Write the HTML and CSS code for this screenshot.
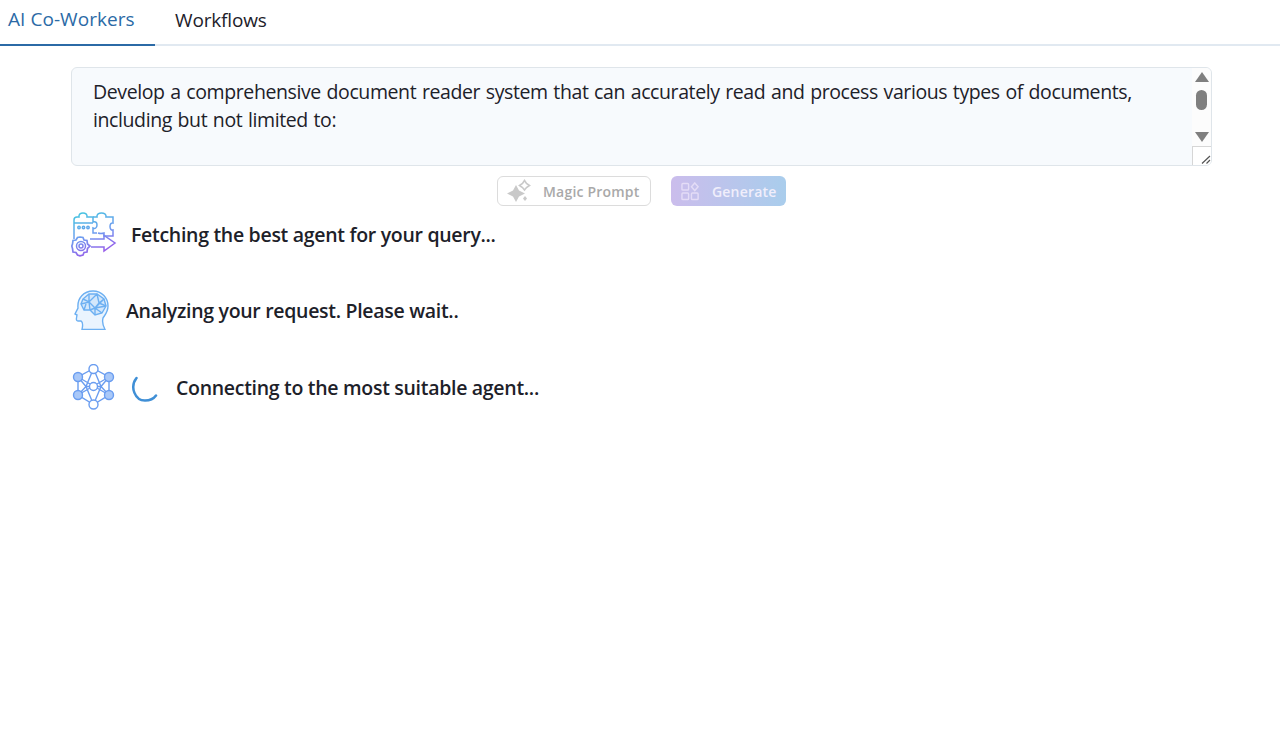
FILE: index.html
```html
<!DOCTYPE html>
<html lang="en">
<head>
<meta charset="utf-8">
<title>AI Co-Workers</title>
<link rel="stylesheet" href="styles.css">
</head>
<body>
<svg class="defs" width="0" height="0" aria-hidden="true">
  <defs>
    <linearGradient id="puzzleGrad" gradientUnits="userSpaceOnUse" x1="14" y1="0" x2="30" y2="46">
      <stop offset="0" stop-color="#45c4e0"/>
      <stop offset="0.5" stop-color="#6f9bf0"/>
      <stop offset="1" stop-color="#a04fe8"/>
    </linearGradient>
  </defs>
</svg>
<nav class="tabs">
  <a class="tab tab-active">AI Co-Workers</a>
  <a class="tab tab-plain">Workflows</a>
</nav>
<main class="content">
  <div class="prompt">
    <p class="prompt-text">Develop a comprehensive document reader system that can accurately read and process various types of documents, including but not limited to:</p>
    <div class="scroll">
      <svg class="arrow" viewBox="0 0 14 10"><path d="M7 0L14 10H0Z"/></svg>
      <div class="thumb"></div>
      <svg class="arrow arrow-down" viewBox="0 0 14 10"><path d="M0 0H14L7 10Z"/></svg>
      <div class="resizer">
        <svg viewBox="0 0 18 18"><path d="M9 16.500L17 9M13.500 16.500L17 13"/></svg>
      </div>
    </div>
  </div>
  <div class="actions">
    <button class="btn btn-magic">
      <svg class="btn-icon" viewBox="0 0 24 24"><path d="M9 6L12 11.500L18 14.500L12 17.500L9 23L6 17.500L0 14.500L6 11.500Z" fill="#c9c9c9"/><path d="M17.500 1.500L19.500 4.500L22.500 6.500L19.500 8.500L17.500 11L15.500 8.500L12.500 6.500L15.500 4.500Z" fill="none" stroke="#c9c9c9" stroke-width="1.6"/><path d="M18 17L20 19.500L18 22L16 19.500Z" fill="#c9c9c9"/></svg>
      <span>Magic Prompt</span>
    </button>
    <button class="btn btn-generate">
      <svg class="btn-icon" viewBox="0 0 20 20" fill="none" stroke="#e4dcf6" stroke-width="1.5"><rect x="1" y="1.500" width="7" height="7" rx="1"/><rect x="1" y="11.500" width="7" height="7" rx="1"/><rect x="11" y="11.500" width="7" height="7" rx="1"/><path d="M14.500 1L18 5L14.500 9L11 5Z"/></svg>
      <span>Generate</span>
    </button>
  </div>
  <div class="status status-one">
    <svg class="icon-puzzle" viewBox="0 0 46 46" fill="none" stroke="url(#puzzleGrad)" stroke-width="1.500">
      <path d="M3 28V9Q3 6 6 6H8C7 0.500 17 0.500 16 6H22V11C25 10 26 12 26 14C26 17 24 18 22 17V22H26"/>
      <path d="M3 12H22"/>
      <path d="M22 6H26C25 0.500 36 0.500 35 6H42V12C38 11 38 20 42 19V25H33V22C30 23 27 22 27 22"/>
      <circle cx="8" cy="16.500" r="1.200"/><circle cx="12.500" cy="16.500" r="1.200"/><circle cx="17" cy="16.500" r="1.200"/>
      <path d="M19 28H33V24.500L44 32L33 40V36H20"/>
      <path d="M9 26L12 26.500L13 29L16 29.500L16.500 33L19 35L16.500 37.500L16 41L13 41.500L12 44L9 44.800L6.500 44L5 41.500L2 41L1.500 37.500L0.800 35L1.500 33L2 29.500L5 29L6.500 26.500Z" stroke-width="1.700"/>
      <circle cx="10" cy="35" r="4.500"/><circle cx="10" cy="35" r="2"/>
    </svg>
    <span class="status-text">Fetching the best agent for your query...</span>
  </div>
  <div class="status status-two">
    <svg class="icon-head" viewBox="0 0 36 40" fill="none" stroke="#6db0f2" stroke-width="1.400">
      <path d="M8 39.500C9 35 9 32 7 31H4Q2 31 2.500 28L3 25L1 24L4 18C3 8 10 1 19 1C28 1 34 8 34 16C34 22 31 25 29 28C28 32 29 36 31 39.500Z" fill="#eaf4fe"/>
      <path d="M9 9L15 4L23 4L30 9L32 16L28 23L21 25L16 20L10 20L7 14Z" fill="#d3e7fb"/>
      <path d="M9 9L15 12L23 4M15 4V12L21 18L30 9M7 14L15 12L16 20M21 18L32 16M21 18L28 23M21 18V25M16 20L21 18M23 4L25 13L30 9M25 13L32 16M25 13L21 18M10 20L12 14"/>
    </svg>
    <span class="status-text">Analyzing your request. Please wait..</span>
  </div>
  <div class="status status-three">
    <svg class="icon-net" viewBox="0 0 44 46" fill="none" stroke="#6a9df0" stroke-width="1.400">
      <path d="M21.500 4.500L6 13L6 31L21.500 40.500L37 31L37 13Z"/>
      <path d="M21.500 4.500L14 22.500L21.500 40.500L29 22.500ZM6 13L37 31M37 13L6 31M6 13L14 22.500L6 31M37 13L29 22.500L37 31M14 22.500H29"/>
      <circle cx="21.500" cy="5" r="4.500" fill="#fff"/>
      <circle cx="21.500" cy="40.500" r="4.500" fill="#fff"/>
      <circle cx="6" cy="13" r="4.500" fill="#a9c8f8"/>
      <circle cx="37" cy="13" r="4.500" fill="#a9c8f8"/>
      <circle cx="6" cy="31" r="4.500" fill="#a9c8f8"/>
      <circle cx="37" cy="31" r="4.500" fill="#a9c8f8"/>
      <circle cx="21.500" cy="22.500" r="4" fill="#fff"/>
    </svg>
    <svg class="spinner" viewBox="0 0 30 30" fill="none"><path d="M6.500 6C-0.500 15 5 28.500 15 28.500C19.500 28.500 23.500 27 26 23.500" stroke="#3f8fd6" stroke-width="2.500" stroke-linecap="round"/></svg>
    <span class="status-text">Connecting to the most suitable agent...</span>
  </div>
</main>
</body>
</html>
```

FILE: styles.css
```css
* { box-sizing: border-box; }
html, body { margin: 0; padding: 0; }
body {
  background: #fff;
  color: #1d2129;
  font-family: "Open Sans", "Noto Sans", "Liberation Sans", sans-serif;
  height: 750px;
  overflow: hidden;
}
.defs { display: block; height: 0; }
.tabs {
  display: flex;
  height: 46px;
  border-bottom: 2px solid #e1e9f1;
}
.tab {
  display: flex;
  align-items: center;
  height: 46px;
  padding: 0 0 6px 8px;
  font-size: 19px;
  letter-spacing: 0.05px;
  color: #1d2129;
}
.tab-plain { margin-left: 12px; letter-spacing: -0.15px; }
.tab-active {
  width: 155px;
  color: #2b6aa6;
  border-bottom: 2px solid #2b6aa6;
}
.content {
  width: 1141px;
  margin: 21px 0 0 71px;
}
.prompt {
  display: flex;
  height: 99px;
  background: #f7fafd;
  border: 1px solid #dfe5ea;
  border-radius: 6px;
  overflow: hidden;
}
.prompt-text {
  flex: 1;
  margin: 0;
  padding: 10px 50px 0 21px;
  font-size: 19.500px;
  line-height: 28px;
  letter-spacing: -0.4px;
  word-spacing: 1px;
}
.scroll {
  position: relative;
  width: 19px;
  background: #fcfcfc;
  display: flex;
  flex-direction: column;
  align-items: center;
  padding: 4px 0 0;
}
.arrow { width: 14px; height: 10px; fill: #7f7f7f; flex: none; }
.arrow-down { margin-top: 22px; }
.thumb { width: 11px; height: 20px; margin-top: 8px; background: #7f7f7f; border-radius: 6px; flex: none; }
.resizer {
  position: absolute;
  right: 0;
  bottom: 0;
  width: 19px;
  height: 19px;
  background: #fff;
  border-left: 1px solid #d6d6d6;
  border-top: 1px solid #d6d6d6;
}
.resizer svg { display: block; width: 18px; height: 18px; fill: none; stroke: #555; stroke-width: 1.200; }
.actions {
  display: flex;
  justify-content: center;
  gap: 20px;
  margin-top: 10px;
}
.btn {
  display: flex;
  align-items: center;
  height: 30px;
  border-radius: 6px;
  font: 600 14px "Open Sans", "Noto Sans", sans-serif;
  letter-spacing: 0.2px;
  padding: 0;
}
.btn-icon { flex: none; }
.btn-magic {
  width: 154px;
  background: #fff;
  border: 1.500px solid #dcdcdc;
  color: #a9a9a9;
  padding-left: 9px;
  gap: 12px;
}
.btn-magic .btn-icon { width: 24px; height: 24px; }
.btn-generate {
  width: 115px;
  border: 0;
  color: #f0eefb;
  background: linear-gradient(90deg, #cbbdec, #a9cdec);
  padding-left: 10px;
  gap: 12px;
}
.btn-generate .btn-icon { width: 19px; height: 19px; }
.status {
  display: flex;
  align-items: center;
}
.status-text {
  font-size: 19.500px;
  font-weight: 600;
  letter-spacing: -0.3px;
  color: #1d2129;
}
.status-one { height: 46px; margin-top: 5px; gap: 14px; }
.icon-puzzle { width: 46px; height: 46px; flex: none; }
.status-two { height: 42px; margin-top: 32px; padding-left: 3px; gap: 16px; }
.icon-head { width: 36px; height: 40px; flex: none; }
.status-three { height: 46px; margin-top: 33px; padding-left: 1px; }
.icon-net { width: 44px; height: 46px; flex: none; }
.spinner { width: 30px; height: 30px; flex: none; margin-left: 14px; margin-right: 16px; }
```
